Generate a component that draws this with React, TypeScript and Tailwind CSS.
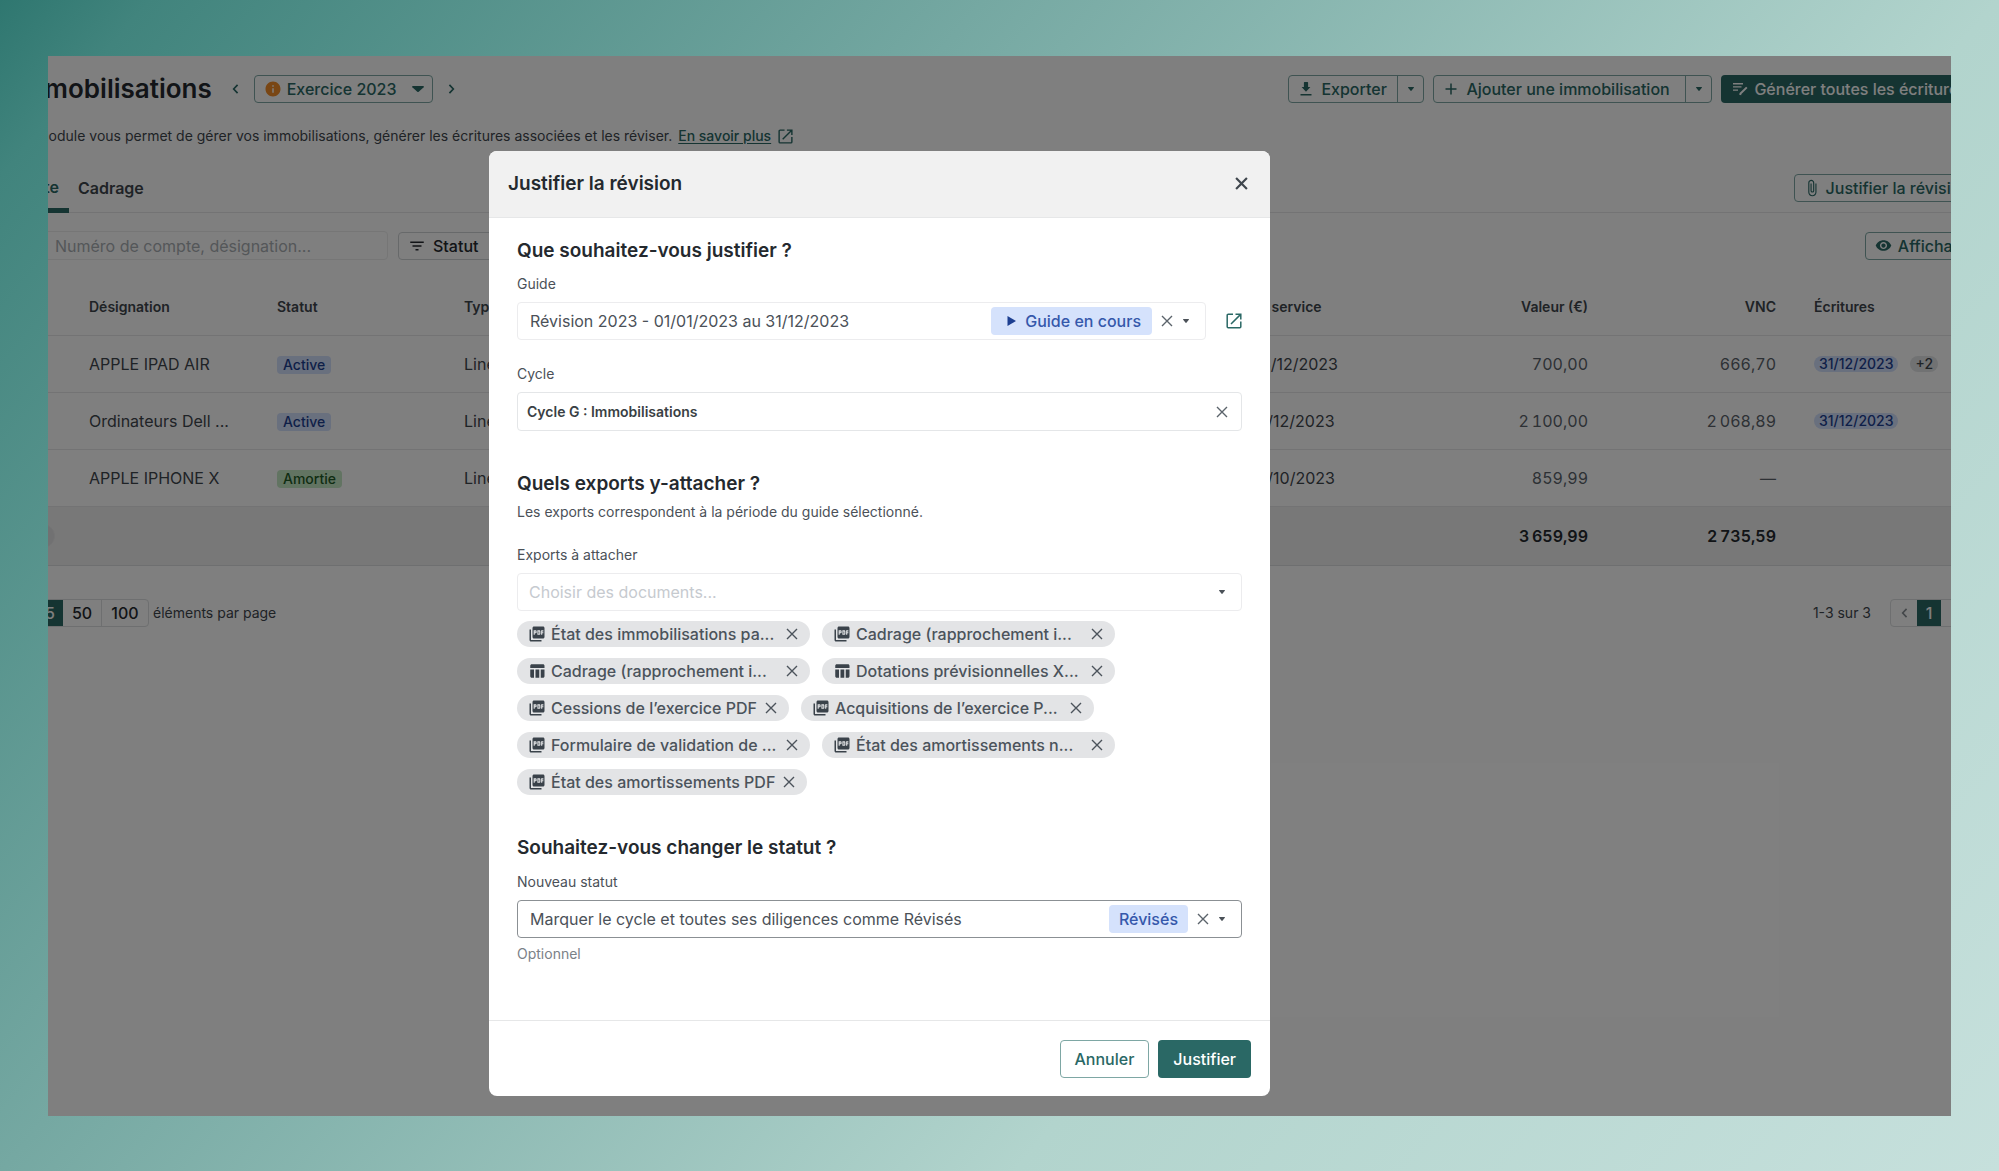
import type { ReactNode } from "react"
import {
  MdAttachFile,
  MdFilterList,
  MdInfo,
  MdPictureAsPdf,
  MdRemoveRedEye,
  MdTableChart,
} from "react-icons/md"

type IconProps = { className?: string }

const Cross = ({ className = "size-3" }: IconProps) => (
  <svg viewBox="0 0 12 12" className={className} fill="none" stroke="currentColor" strokeWidth="1.4">
    <path d="M1 1l10 10M11 1L1 11" />
  </svg>
)

const Caret = ({ className = "w-[6px] h-1" }: IconProps) => (
  <svg viewBox="0 0 12 7" className={className} fill="currentColor" preserveAspectRatio="none">
    <path d="M1 0h10c.9 0 1.200.9.700 1.500L6.700 6.600c-.4.4-1 .4-1.400 0L.3 1.500C-.2.9.1 0 1 0z" />
  </svg>
)

const Chevron = ({ className = "" }: IconProps) => (
  <svg viewBox="0 0 8 12" className={`w-[7px] h-[10px] ${className}`} fill="none" stroke="currentColor" strokeWidth="2">
    <path d="M6.500 1L1.800 6l4.700 5" />
  </svg>
)

const OpenIcon = ({ className = "size-4" }: IconProps) => (
  <svg viewBox="0 0 16 16" className={className} fill="none" stroke="currentColor" strokeWidth="1.500">
    <path d="M7 1.200H2.200c-.6 0-1 .4-1 1v11.600c0 .6.4 1 1 1h11.600c.6 0 1-.4 1-1V8.500" />
    <path d="M9.500 1.200h5.300v5.300M14.400 1.600L5 11" />
  </svg>
)

const DownloadIcon = () => (
  <svg viewBox="0 0 12 14" className="w-3 h-[14px]" fill="currentColor">
    <path d="M4.500 0h3a.6.6 0 01.6.6V5h2.300L6 9.800 1.600 5h2.300V.6A.6.6 0 014.500 0zM.5 12h11v1.600H.5z" />
  </svg>
)

const PlusIcon = () => (
  <svg viewBox="0 0 12 12" className="size-3" fill="none" stroke="currentColor" strokeWidth="1.500">
    <path d="M6 .5v11M.5 6h11" />
  </svg>
)

const EntriesIcon = () => (
  <svg viewBox="0 0 15 14" className="w-[15px] h-[14px]" fill="none" stroke="currentColor" strokeWidth="1.400">
    <path d="M0 1.700h10M0 4.900h8.500M0 8.100h5" />
    <path d="M7.200 13l.3-1.400L13.800 5.400" strokeWidth="2" />
  </svg>
)

const PlayIcon = () => (
  <svg viewBox="0 0 9 10" className="w-[9px] h-[10px]" fill="#1d3f91">
    <path d="M.5 0L9 5 .5 10z" />
  </svg>
)

const rows = [
  { name: "APPLE IPAD AIR", status: "Active", date: "28/12/2023", value: "700,00", vnc: "666,70", entry: "31/12/2023", more: "+2" },
  { name: "Ordinateurs Dell ...", status: "Active", date: "21/12/2023", value: "2\u202f100,00", vnc: "2\u202f068,89", entry: "31/12/2023" },
  { name: "APPLE IPHONE X", status: "Amortie", date: "21/10/2023", value: "859,99", vnc: "—" },
]

const files = [
  { name: "État des immobilisations pa...", type: "pdf", cut: true },
  { name: "Cadrage (rapprochement i...", type: "pdf", cut: true },
  { name: "Cadrage (rapprochement i...", type: "xls", cut: true },
  { name: "Dotations prévisionnelles X...", type: "xls", cut: true },
  { name: "Cessions de l’exercice PDF", type: "pdf" },
  { name: "Acquisitions de l’exercice P...", type: "pdf", cut: true },
  { name: "Formulaire de validation de ...", type: "pdf", cut: true },
  { name: "État des amortissements n...", type: "pdf", cut: true },
  { name: "État des amortissements PDF", type: "pdf" },
]

const SplitButton = ({ icon, label, className }: { icon: ReactNode; label: string; className: string }) => (
  <div className={`flex h-7 rounded border border-[#7ea7a4] text-[#2a6865] ${className}`}>
    <button className="flex flex-1 items-center gap-[5px] pl-[7px] font-medium">
      <span className="flex w-5 justify-center">{icon}</span>
      {label}
    </button>
    <button aria-label={`Options : ${label}`} className="flex w-[26px] items-center justify-center border-l border-[#7ea7a4]">
      <Caret />
    </button>
  </div>
)

const Toolbar = () => (
  <div className="flex h-7 items-center">
    <h1 className="text-[26px] leading-7 font-semibold text-[#24292e]">Immobilisations</h1>
    <button aria-label="Exercice précédent" className="ml-5 flex w-[22px] justify-start text-[#2a6865]">
      <Chevron />
    </button>
    <div className="flex h-7 w-[179px] items-center rounded border border-[#7ea7a4] pl-[9px] pr-2 text-[#2a6865]">
      <MdInfo className="mr-[5px] size-[18px] shrink-0 text-[#f28c28]" />
      <select aria-label="Exercice" className="min-w-0 flex-1 appearance-none bg-transparent font-medium">
        <option>Exercice 2023</option>
      </select>
      <Caret className="h-[6px] w-3" />
    </div>
    <button aria-label="Exercice suivant" className="ml-[15px] text-[#2a6865]">
      <Chevron className="rotate-180" />
    </button>
    <div className="ml-auto flex shrink-0 gap-[9px] whitespace-nowrap">
      <SplitButton icon={<DownloadIcon />} label="Exporter" className="w-[136px]" />
      <SplitButton icon={<PlusIcon />} label="Ajouter une immobilisation" className="w-[279px]" />
      <button className="flex h-7 items-center gap-[6px] rounded bg-[#2a6865] pl-3 pr-[18px] font-medium text-white">
        <EntriesIcon />
        Générer toutes les écritures
      </button>
    </div>
  </div>
)

const AssetsTable = () => (
  <table className="mt-[19px] w-full table-fixed border-collapse text-left text-[#3f464d]">
    <colgroup>
      <col className="w-14" />
      <col className="w-[188px]" />
      <col className="w-[187px]" />
      <col />
      <col className="w-[188px]" />
      <col className="w-[187px]" />
      <col className="w-[188px]" />
      <col className="w-[190px]" />
    </colgroup>
    <thead>
      <tr className="h-14 border-b border-[#e6e7e9] text-sm">
        <th></th>
        <th className="px-[19px] font-semibold">Désignation</th>
        <th className="px-[19px] font-semibold">Statut</th>
        <th className="px-[19px] font-semibold">Type</th>
        <th className="px-[19px] font-semibold">En service</th>
        <th className="px-[19px] text-right font-semibold">Valeur (€)</th>
        <th className="px-[19px] text-right font-semibold">VNC</th>
        <th className="px-[19px] font-semibold">Écritures</th>
      </tr>
    </thead>
    <tbody>
      {rows.map((row) => (
        <tr key={row.name} className="h-[57px] border-b border-[#e6e7e9]">
          <td></td>
          <td className="px-[19px] whitespace-nowrap">{row.name}</td>
          <td className="px-[19px]">
            <span
              className={
                row.status === "Active"
                  ? "inline-block rounded bg-[#d3e0fd] px-[6px] text-sm leading-[18px] font-medium text-[#1d3f91]"
                  : "inline-block rounded bg-[#c5e8c5] px-[6px] text-sm leading-[18px] font-medium text-[#1f5a26]"
              }
            >
              {row.status}
            </span>
          </td>
          <td className="px-[19px]">Linéaire</td>
          <td className="px-[19px]">{row.date}</td>
          <td className="px-[19px] text-right text-[#5b636b] tabular-nums">{row.value}</td>
          <td className="px-[19px] text-right text-[#5b636b] tabular-nums">{row.vnc}</td>
          <td className="px-[19px]">
            <div className="flex gap-3 text-sm leading-4 font-medium">
              {row.entry && <span className="rounded-full bg-[#d3e0fd] px-[5px] text-[#1d3f91]">{row.entry}</span>}
              {row.more && <span className="rounded-full bg-[#e2e4e6] px-[5px]">{row.more}</span>}
            </div>
          </td>
        </tr>
      ))}
    </tbody>
    <tfoot>
      <tr className="h-[59px] border-b border-[#dcdee0] bg-[#f1f1f1] font-semibold text-[#24292e] tabular-nums">
        <td>
          <div className="h-6 w-[41px] rounded-full border border-[#e8e8ea] bg-[#e2e2e4]" />
        </td>
        <td colSpan={4}></td>
        <td className="px-[19px] text-right">3{"\u202f"}659,99</td>
        <td className="px-[19px] text-right">2{"\u202f"}735,59</td>
        <td></td>
      </tr>
    </tfoot>
  </table>
)

const Pagination = () => (
  <div className="mt-[33px] flex items-center justify-between text-[#3f464d]">
    <div className="flex items-center gap-1">
      <div className="flex h-7 overflow-hidden rounded border border-[#dcdee0] font-medium text-[#24292e]">
        <button className="w-12 bg-[#2a6865] pr-2 text-right text-white">25</button>
        <button className="w-[38px]">50</button>
        <button className="w-[47px] border-l border-[#dcdee0]">100</button>
      </div>
      <span className="text-sm">éléments par page</span>
    </div>
    <div className="flex items-center gap-[19px]">
      <span className="text-sm">1-3 sur 3</span>
      <div className="flex h-7 overflow-hidden rounded border border-[#dcdee0] font-medium">
        <button aria-label="Page précédente" className="flex w-[26px] items-center justify-center text-[#8a9096]">
          <Chevron />
        </button>
        <button className="w-6 bg-[#2a6865] text-white">1</button>
        <button aria-label="Page suivante" className="flex w-[43px] items-center justify-center text-[#8a9096]">
          <Chevron className="rotate-180" />
        </button>
      </div>
    </div>
  </div>
)

const Background = () => (
  <div className="-mr-[34px] -ml-[34px] pt-[19px]">
    <Toolbar />
    <p className="mt-[23px] flex h-5 items-center text-sm whitespace-nowrap text-[#3f464d]">
      Ce module vous permet de gérer vos immobilisations, générer les écritures associées et les réviser.
      <a href="#aide" className="ml-[6px] flex items-center gap-[7px] font-medium text-[#2a6865]">
        <span className="underline underline-offset-2">En savoir plus</span>
        <OpenIcon className="size-[15px]" />
      </a>
    </p>
    <div className="mt-[17px] flex h-[50px] items-center border-b border-[#e6e7e9]">
      <button className="h-[51px] w-[55px] border-b-[5px] border-[#2a6865] pt-[4px] pr-[10px] text-right font-semibold text-[#2a6865]">
        Liste
      </button>
      <button className="ml-[9px] font-semibold text-[#3f464d]">Cadrage</button>
      <button className="ml-auto flex h-7 items-center gap-[5px] rounded border border-[#7ea7a4] pr-[14px] pl-2 font-medium text-[#2a6865]">
        <MdAttachFile className="size-[18px]" />
        Justifier la révision
      </button>
    </div>
    <div className="mt-[18px] flex items-center gap-[10px]">
      <input
        type="search"
        aria-label="Rechercher"
        placeholder="Numéro de compte, désignation..."
        className="h-[29px] w-[374px] rounded border border-[#eceded] pl-10 placeholder:text-[#a9aeb3]"
      />
      <button className="flex h-7 items-center gap-[7px] rounded border border-[#cfd2d5] pr-4 pl-[9px] font-medium text-[#24292e]">
        <MdFilterList className="size-[18px]" />
        Statut
      </button>
      <button className="ml-auto flex h-7 items-center gap-[6px] rounded border border-[#7ea7a4] pr-3 pl-[9px] font-medium text-[#2a6865]">
        <MdRemoveRedEye className="size-[17px]" />
        Affichage
      </button>
    </div>
    <AssetsTable />
    <Pagination />
  </div>
)

const Heading = ({ children }: { children: ReactNode }) => (
  <h3 className="text-[19px] leading-7 font-semibold text-[#24292e]">{children}</h3>
)

const ClearButton = ({ label }: { label: string }) => (
  <button aria-label={label} className="text-[#5b636b]">
    <Cross />
  </button>
)

const ExportChip = ({ name, type, cut }: { name: string; type: string; cut?: boolean }) => (
  <li className="flex h-[26px] items-center rounded-full bg-[#e3e4e6] pr-3 pl-[11px] font-medium text-[#4b535b]">
    {type === "pdf" ? (
      <MdPictureAsPdf className="mr-[5px] size-[18px] text-[#3a424a]" />
    ) : (
      <MdTableChart className="mr-[5px] size-[18px] text-[#3a424a]" />
    )}
    <span className={cut ? "w-[227px] whitespace-nowrap" : "whitespace-nowrap"}>{name}</span>
    <button aria-label={`Retirer ${name}`} className="ml-2">
      <Cross />
    </button>
  </li>
)

const Modal = () => (
  <section role="dialog" aria-labelledby="modal-title" className="w-[781px] overflow-hidden rounded-lg bg-white">
    <header className="flex h-[67px] items-center justify-between border-b border-[#e6e7e8] bg-[#f1f1f1] pr-[22px] pl-[19px]">
      <h2 id="modal-title" className="text-[19px] leading-7 font-semibold text-[#24292e]">Justifier la révision</h2>
      <button aria-label="Fermer" className="pb-[2px] text-[#3f464d]">
        <Cross className="size-[13px] stroke-2" />
      </button>
    </header>

    <div className="px-7 pt-[19px] text-[#4b5158]">
      <Heading>Que souhaitez-vous justifier ?</Heading>
      <label htmlFor="guide" className="mt-[9px] block text-sm">Guide</label>
      <div className="mt-2 flex items-center gap-5">
        <div className="flex h-[38px] flex-1 items-center rounded border border-[#ececee] pr-4 pl-3">
          <select id="guide" className="min-w-0 flex-1 appearance-none bg-transparent">
            <option>Révision 2023 - 01/01/2023 au 31/12/2023</option>
          </select>
          <span className="mr-[9px] flex h-7 items-center gap-[9px] rounded bg-[#d5e2fc] pr-[11px] pl-4 font-medium text-[#3558ab]">
            <PlayIcon />
            Guide en cours
          </span>
          <ClearButton label="Effacer le guide" />
          <Caret className="ml-[10px] h-1 w-[6px]" />
        </div>
        <a href="#guide-ouvrir" aria-label="Ouvrir le guide" className="text-[#2a6865]">
          <OpenIcon />
        </a>
      </div>

      <label htmlFor="cycle" className="mt-6 block text-sm">Cycle</label>
      <div className="mt-2 flex h-[39px] items-center rounded border border-[#e4e6e8] pr-[13px] pl-[9px]">
        <input
          id="cycle"
          defaultValue="Cycle G : Immobilisations"
          className="min-w-0 flex-1 text-sm font-semibold text-[#3a3f44]"
        />
        <ClearButton label="Effacer le cycle" />
      </div>

      <div className="mt-[39px]">
        <Heading>Quels exports y-attacher ?</Heading>
        <p className="mt-1 text-sm">Les exports correspondent à la période du guide sélectionné.</p>
        <label htmlFor="exports" className="mt-[23px] block text-sm">Exports à attacher</label>
        <div className="mt-2 flex h-[38px] items-center rounded border border-[#ececee] pr-4 pl-[11px]">
          <select id="exports" className="min-w-0 flex-1 appearance-none bg-transparent text-[#c6cacf]">
            <option>Choisir des documents...</option>
          </select>
          <Caret />
        </div>
        <ul className="mt-[10px] flex flex-wrap gap-x-3 gap-y-[11px]">
          {files.map((file, i) => (
            <ExportChip key={i} {...file} />
          ))}
        </ul>
      </div>

      <div className="mt-[39px]">
        <Heading>Souhaitez-vous changer le statut ?</Heading>
        <label htmlFor="statut" className="mt-[10px] block text-sm">Nouveau statut</label>
        <div className="mt-2 flex h-[38px] items-center rounded border border-[#8b9094] pr-4 pl-3">
          <select id="statut" className="min-w-0 flex-1 appearance-none bg-transparent">
            <option>Marquer le cycle et toutes ses diligences comme Révisés</option>
          </select>
          <span className="mr-[9px] flex h-7 items-center rounded bg-[#d5e2fc] px-[10px] font-medium text-[#3558ab]">Révisés</span>
          <ClearButton label="Effacer le statut" />
          <Caret className="ml-[10px] h-1 w-[6px]" />
        </div>
        <p className="mt-[6px] text-sm text-[#7b8187]">Optionnel</p>
      </div>
    </div>

    <footer className="mt-14 flex justify-end gap-[9px] border-t border-[#e6e7e8] px-[19px] pt-[19px] pb-[18px]">
      <button className="h-[38px] rounded border border-[#7ea7a4] px-[14px] font-medium text-[#2a6865]">Annuler</button>
      <button className="h-[38px] rounded bg-[#2a6865] px-[15px] font-medium text-white">Justifier</button>
    </footer>
  </section>
)

const App = () => {
  return (
    <div className="flex min-h-screen flex-col bg-[linear-gradient(130deg,#2f7770_0%,#41847d_5%,#75a8a2_33%,#b2d4cd_67%,#c6e0dc_100%)] px-12 pt-14 pb-[55px] font-[Inter,'Liberation_Sans',sans-serif]">
      <main className="relative flex-1 overflow-hidden bg-white">
        <Background />
        <div className="absolute inset-0 flex justify-center bg-black/50 pt-[95px] pr-[240px]">
          <div>
            <Modal />
          </div>
        </div>
      </main>
    </div>
  )
}

export default App
